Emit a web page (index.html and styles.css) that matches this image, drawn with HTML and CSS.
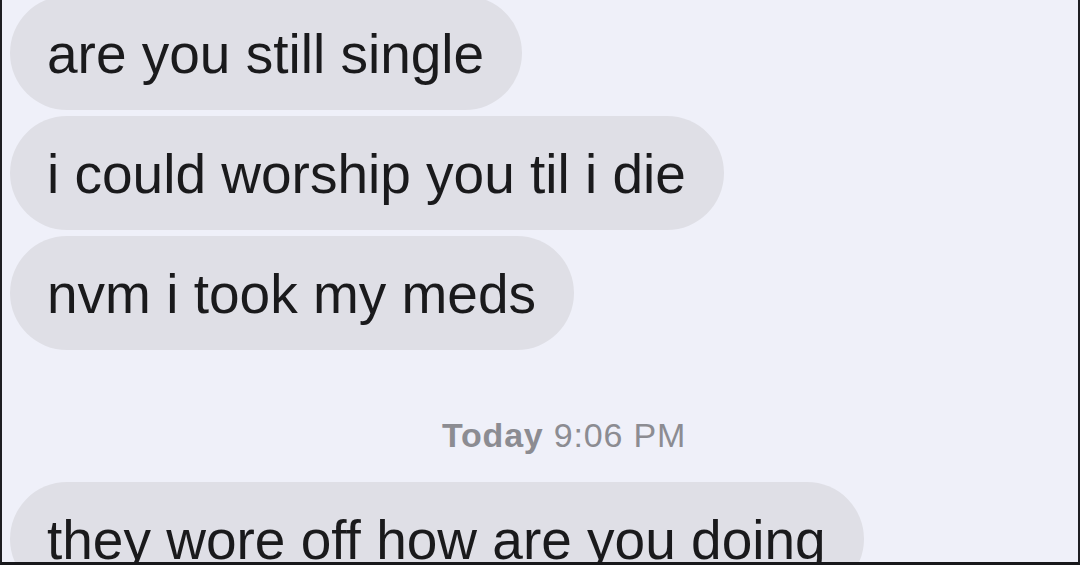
FILE: index.html
```html
<!DOCTYPE html>
<html lang="en">
<head>
<meta charset="utf-8">
<title>Messages</title>
<link rel="stylesheet" href="styles.css">
</head>
<body>
<main class="screen">
  <section class="thread">
    <div class="bubble">are you still single</div>
    <div class="bubble">i could worship you til i die</div>
    <div class="bubble">nvm i took my meds</div>
  </section>
  <p class="stamp"><b>Today</b> 9:06 PM</p>
  <section class="thread">
    <div class="bubble">they wore off how are you doing</div>
  </section>
</main>
</body>
</html>
```
FILE: styles.css
```css
html, body {
  margin: 0;
  padding: 0;
  background: #1b1b1f;
}
.screen {
  box-sizing: border-box;
  width: 1080px;
  height: 565px;
  overflow: hidden;
  background: #eff0f9;
  border-left: 2px solid #1e1e22;
  border-right: 2px solid #1e1e22;
  border-bottom: 3px solid #18181b;
  padding: 0 0 0 8px;
  display: flex;
  flex-direction: column;
  font-family: "Liberation Sans", Arial, sans-serif;
}
.thread {
  display: flex;
  flex-direction: column;
  align-items: flex-start;
  gap: 6px;
  margin-top: -4px;
}
.bubble {
  background: #dfdfe6;
  color: #1a1a1c;
  font-size: 55px;
  line-height: 64px;
  padding: 26px 38px 24px 37px;
  border-radius: 57px;
  white-space: nowrap;
}
.stamp {
  margin: 65px 0 27px;
  padding-left: 40px;
  text-align: center;
  font-size: 34px;
  line-height: 40px;
  color: #8c8c92;
  letter-spacing: 0.8px;
}
.stamp b {
  font-weight: 700;
}
.thread + .stamp + .thread {
  margin-top: 0;
}
```
